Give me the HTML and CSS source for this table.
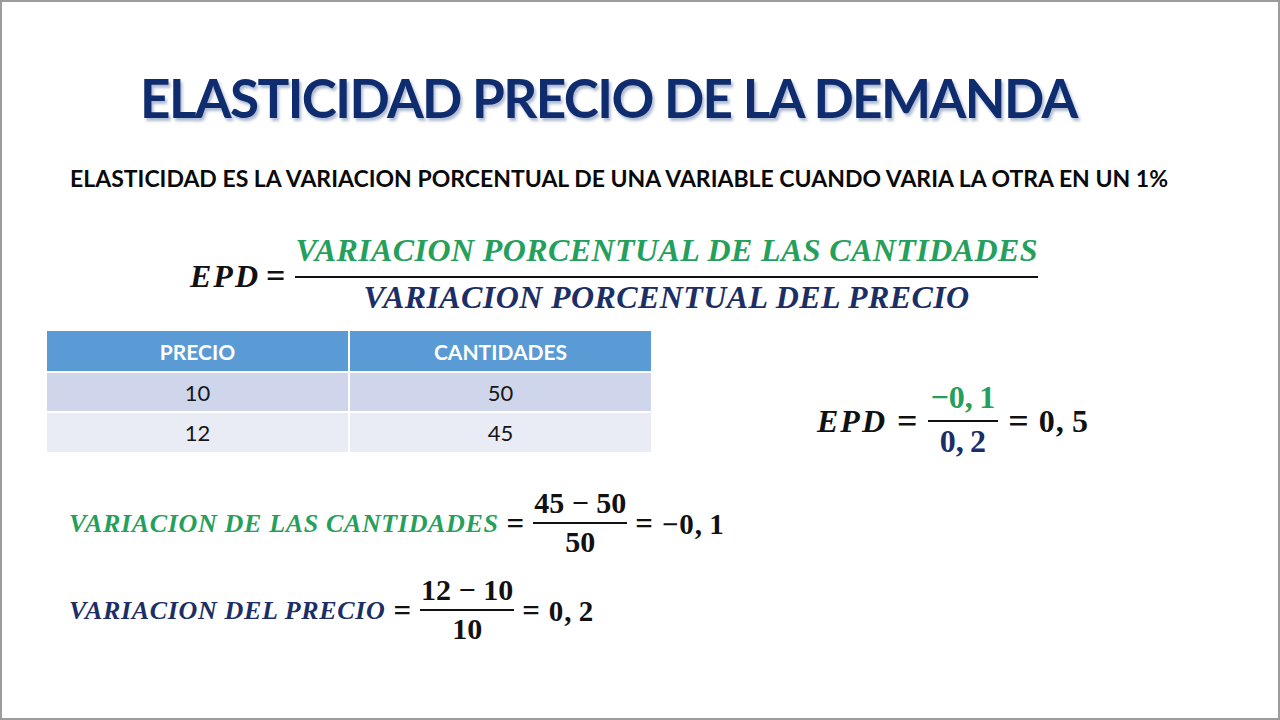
FILE: index.html
```html
<!DOCTYPE html>
<html lang="es">
<head>
<meta charset="utf-8">
<title>Elasticidad precio de la demanda</title>
<link rel="stylesheet" href="styles.css">
</head>
<body>
<div class="slide">
  <h1 class="title">ELASTICIDAD PRECIO DE LA DEMANDA</h1>
  <p class="def">ELASTICIDAD ES LA VARIACION PORCENTUAL DE UNA VARIABLE CUANDO VARIA LA OTRA EN UN 1%</p>

  <div class="main-formula">
    <span class="m-var">EPD</span><span class="m-eq">=</span>
    <span class="frac frac-big">
      <span class="num green">VARIACION PORCENTUAL DE LAS CANTIDADES</span>
      <span class="den navy">VARIACION PORCENTUAL DEL PRECIO</span>
    </span>
  </div>

  <div class="middle">
    <table class="data">
      <thead>
        <tr><th>PRECIO</th><th>CANTIDADES</th></tr>
      </thead>
      <tbody>
        <tr class="odd"><td>10</td><td>50</td></tr>
        <tr class="even"><td>12</td><td>45</td></tr>
      </tbody>
    </table>

    <div class="epd-result">
      <span class="m-var">EPD</span><span class="m-eq">=</span>
      <span class="frac frac-num">
        <span class="num green">−0,&#8201;1</span>
        <span class="den navy">0,&#8201;2</span>
      </span>
      <span class="m-eq">=</span><span class="m-val">0,&#8201;5</span>
    </div>
  </div>

  <div class="calc calc-q">
    <span class="c-label green">VARIACION DE LAS CANTIDADES</span><span class="c-eq">=</span>
    <span class="frac frac-c">
      <span class="num">45 − 50</span>
      <span class="den">50</span>
    </span>
    <span class="c-eq">=</span><span class="c-val">−0,&#8201;1</span>
  </div>

  <div class="calc calc-p">
    <span class="c-label navy">VARIACION DEL PRECIO</span><span class="c-eq">=</span>
    <span class="frac frac-c">
      <span class="num">12 − 10</span>
      <span class="den">10</span>
    </span>
    <span class="c-eq">=</span><span class="c-val">0,&#8201;2</span>
  </div>
</div>
</body>
</html>
```

FILE: styles.css
```css
* { box-sizing: border-box; }
html, body { margin: 0; padding: 0; background: #ffffff; }

.slide {
  width: 1280px;
  height: 720px;
  border: 2px solid #9c9c9c;
  background: #ffffff;
  overflow: hidden;
  display: flex;
  flex-direction: column;
}

.title {
  margin: 69px 0 0 138px;
  font-family: "Lato", "Open Sans", sans-serif;
  font-weight: 700;
  font-size: 53px;
  line-height: 53px;
  color: #0f2c6e;
  letter-spacing: -1.6px;
  text-shadow: 2px 3px 3px rgba(110, 130, 170, 0.55);
  white-space: nowrap;
}

.def {
  margin: 42px 0 0 68px;
  font-family: "Lato", "Open Sans", sans-serif;
  font-weight: 700;
  font-size: 23px;
  line-height: 24px;
  color: #0a0a0a;
  white-space: nowrap;
}

.green { color: #24a05c; }
.navy { color: #1b2f66; }

.frac {
  display: inline-flex;
  flex-direction: column;
  align-items: center;
}
.frac .num {
  border-bottom: 2px solid #111;
  align-self: stretch;
  text-align: center;
}
.frac .den { text-align: center; }

.m-var, .m-eq, .m-val { color: #111; }

/* main formula */
.main-formula {
  margin: 42px 0 0 188px;
  display: flex;
  align-items: center;
  font-family: "Liberation Serif", serif;
  font-weight: 700;
  font-size: 32px;
}
.main-formula .m-var {
  font-style: italic;
  letter-spacing: 2px;
  line-height: 36px;
  padding-top: 5px;
}
.main-formula .m-eq {
  margin: 0 10px 0 6px;
  font-style: normal;
  font-size: 34px;
  line-height: 36px;
  padding-top: 4px;
}
.frac-big {
  font-style: italic;
  letter-spacing: 0.4px;
}
.frac-big .num { line-height: 36px; padding: 0 0 8px 0; }
.frac-big .den { line-height: 36px; padding-top: 1px; }

/* middle */
.middle {
  margin-top: 14px;
  display: flex;
  align-items: flex-start;
}
.data {
  margin-left: 43px;
  border-collapse: separate;
  border-spacing: 2px;
  font-family: "Lato", "Open Sans", sans-serif;
  width: 608px;
}
.data th, .data td {
  width: 50%;
  text-align: center;
  padding: 0;
}
.data th {
  background: #5b9bd5;
  color: #ffffff;
  font-weight: 700;
  font-size: 21px;
  height: 40px;
}
.data td {
  font-size: 22px;
  color: #161616;
  height: 39px;
}
.data .odd td { background: #cfd6ec; height: 38px; }
.data .even td { background: #e9ebf5; }

.epd-result {
  margin: 50px 0 0 164px;
  display: flex;
  align-items: center;
  font-family: "Liberation Serif", serif;
  font-weight: 700;
  font-size: 32px;
}
.epd-result .m-var { font-style: italic; letter-spacing: 2px; line-height: 36px; padding-top: 4px; }
.epd-result .m-eq { margin: 0 10px; font-size: 36px; line-height: 36px; padding-top: 3px; }
.epd-result .m-val { line-height: 36px; padding-top: 4px; letter-spacing: 1px; }
.frac-num .num { line-height: 36px; padding: 0 3px 5px; }
.frac-num .den { line-height: 36px; padding-top: 1px; }

/* calculation rows */
.calc {
  margin-left: 67px;
  display: flex;
  align-items: center;
  font-family: "Liberation Serif", serif;
  font-weight: 700;
  font-size: 30px;
  color: #111;
}
.calc-q { margin-top: 28px; }
.calc-p { margin-top: 16px; }
.c-label {
  font-style: italic;
  letter-spacing: 0.65px;
  font-size: 26px;
  line-height: 30px;
  padding-top: 2px;
}
.c-eq { margin: 0 9px 0 8px; font-size: 31px; line-height: 32px; padding-top: 2px; }
.c-val { font-size: 29px; line-height: 32px; padding-top: 2px; letter-spacing: 0.8px; }
.frac-c .num { line-height: 32px; padding: 0 1px 3px; }
.frac-c .den { line-height: 32px; padding-top: 2px; }
```
